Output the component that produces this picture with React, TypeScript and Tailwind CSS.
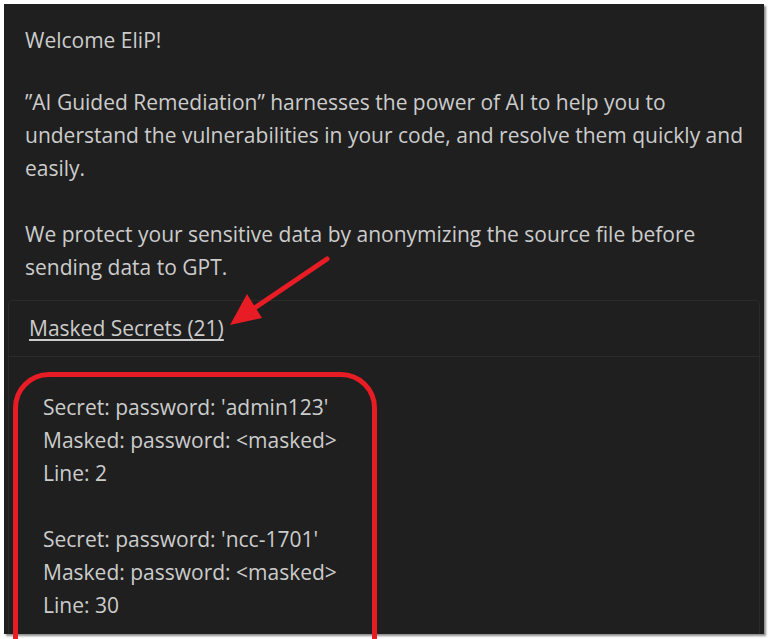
import React from "react";

export default function App() {
  const font = { fontFamily: '"Open Sans", "Noto Sans", sans-serif' };
  return (
    <div className="w-[769px] h-[639px] bg-white overflow-hidden pl-[4px] pt-[4px] relative" style={font}>
      <div className="w-[760px] h-[630px] bg-[#1f1f1f] shadow-[2px_2px_2px_rgba(0,0,0,0.45)] text-[#cccccc] text-[21px] leading-[33px] overflow-hidden">
        <div className="pl-[21px] pt-[20px]">
          <p>Welcome EliP!</p>
          <p className="mt-[29px]">
            ”AI Guided Remediation” harnesses the power of AI to help you to<br />
            understand the vulnerabilities in your code, and resolve them quickly and<br />
            easily.
          </p>
          <p className="mt-[33px]">
            We protect your sensitive data by anonymizing the source file before<br />
            sending data to GPT.
          </p>
        </div>
        <div className="mx-[4px] mt-[16px] border border-[#2a2a2a] rounded-[4px] h-[400px]">
          <div className="pl-[20px] pt-[11px] pb-[11px] border-b border-[#2a2a2a]">
            <span className="underline underline-offset-[3px] decoration-[#cccccc]">Masked Secrets (21)</span>
          </div>
          <div className="pl-[34px] pt-[34px]">
            <p>Secret: password: 'admin123'</p>
            <p>Masked: password: &lt;masked&gt;</p>
            <p>Line: 2</p>
            <p className="mt-[33px]">Secret: password: 'ncc-1701'</p>
            <p>Masked: password: &lt;masked&gt;</p>
            <p>Line: 30</p>
          </div>
        </div>
      </div>
      <div className="absolute left-[13px] top-[372px] w-[364px] h-[320px] border-[5px] border-[#e81c24] rounded-[36px]" />
      <svg className="absolute left-0 top-0" width="769" height="639" viewBox="0 0 769 639">
        <line x1="327" y1="259" x2="256" y2="307" stroke="#e81c24" strokeWidth="5" strokeLinecap="round" />
        <polygon points="230,325 247,294 262,318" fill="#e81c24" />
      </svg>
    </div>
  );
}
